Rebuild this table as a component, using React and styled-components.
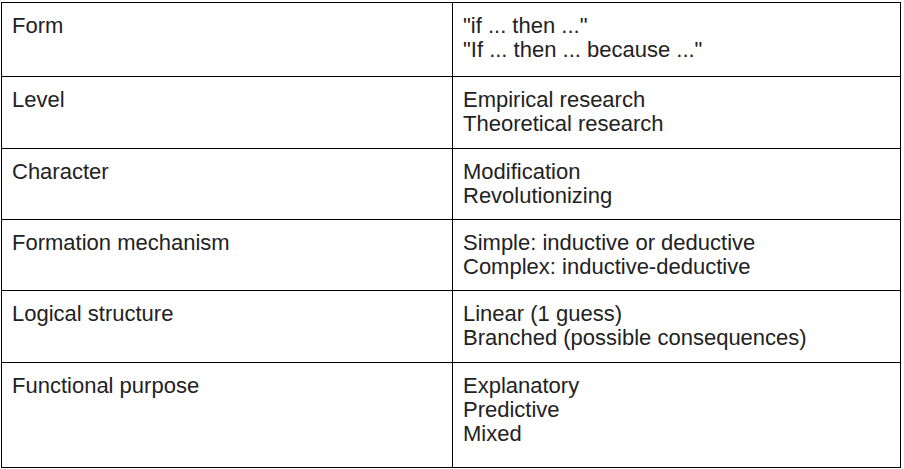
import React from "react";
import styled, { createGlobalStyle } from "styled-components";

const GlobalStyle = createGlobalStyle`
  body {
    margin: 0;
    background: #fff;
  }
`;

const Page = styled.div`
  padding: 2px 0 0 1px;
`;

const Table = styled.table`
  width: 900px;
  border-collapse: collapse;
  table-layout: fixed;
  font-family: "Liberation Sans", Arial, sans-serif;
  font-size: 22px;
  line-height: 24px;
  color: #222;
`;

const Row = styled.tr`
  height: ${(p) => p.$h}px;
`;

const Cell = styled.td`
  border: 1px solid #000;
  padding: 11px 10px 0;
  vertical-align: top;
  box-sizing: border-box;
  width: ${(p) => p.$w || "auto"};
`;

const Line = styled.div`
  white-space: nowrap;
`;

const rows = [
  ["Form", ['"if ... then ..."', '"If ... then ... because ..."'], 74],
  ["Level", ["Empirical research", "Theoretical research"], 72],
  ["Character", ["Modification", "Revolutionizing"], 71],
  ["Formation mechanism", ["Simple: inductive or deductive", "Complex: inductive-deductive"], 71],
  ["Logical structure", ["Linear (1 guess)", "Branched (possible consequences)"], 72],
  ["Functional purpose", ["Explanatory", "Predictive", "Mixed"], 105],
];

const App = () => {
  return (
    <Page>
      <GlobalStyle />
      <Table>
        <tbody>
          {rows.map(([label, values, h]) => (
            <Row key={label} $h={h}>
              <Cell $w="451px">{label}</Cell>
              <Cell>
                {values.map((v) => (
                  <Line key={v}>{v}</Line>
                ))}
              </Cell>
            </Row>
          ))}
        </tbody>
      </Table>
    </Page>
  );
};

export default App;
